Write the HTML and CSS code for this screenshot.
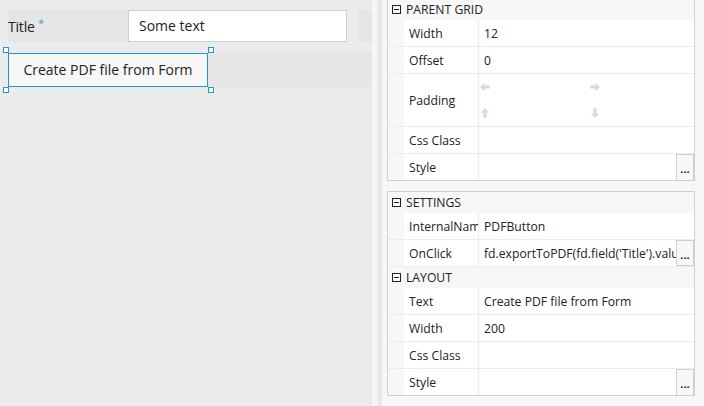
FILE: index.html
```html
<!DOCTYPE html>
<html>
<head>
<meta charset="utf-8">
<link rel="stylesheet" href="styles.css">
</head>
<body>
<div class="canvas">
  <div class="field-row">
    <div class="field-label">Title <span class="req">*</span></div>
    <div class="field-input">Some text</div>
    <div class="field-gap"></div>
    <div class="field-rest"></div>
  </div>
  <div class="button-row">
    <div class="btn-wrap">
      <div class="pdf-btn">Create PDF file from Form</div>
      <span class="handle h-tl"></span>
      <span class="handle h-tr"></span>
      <span class="handle h-bl"></span>
      <span class="handle h-br"></span>
    </div>
  </div>
</div>
<div class="splitter"></div>
<div class="props">
  <div class="panel panel-first">
    <div class="ph"><span class="ph-icon"><span class="minus"></span></span><span class="ph-title">PARENT GRID</span></div>
    <div class="row"><div class="indent"></div><div class="lbl">Width</div><div class="val">12</div></div>
    <div class="row"><div class="indent"></div><div class="lbl">Offset</div><div class="val">0</div></div>
    <div class="row row-pad"><div class="indent"></div><div class="lbl">Padding</div>
      <div class="val pad-grid">
        <div class="pad-cell"><svg width="10" height="10" viewBox="0 0 10 10"><path d="M0 5 L4.5 0.8 L4.5 3.4 L10 3.4 L10 6.6 L4.5 6.6 L4.5 9.2 Z" fill="#dadada"/></svg></div>
        <div class="pad-cell"><svg width="10" height="10" viewBox="0 0 10 10"><path d="M10 5 L5.5 0.8 L5.5 3.4 L0 3.4 L0 6.6 L5.5 6.6 L5.5 9.2 Z" fill="#dadada"/></svg></div>
        <div class="pad-cell"><svg width="10" height="10" viewBox="0 0 10 10"><path d="M5 0 L0.8 4.5 L3.4 4.5 L3.4 10 L6.6 10 L6.6 4.5 L9.2 4.5 Z" fill="#dadada"/></svg></div>
        <div class="pad-cell"><svg width="10" height="10" viewBox="0 0 10 10"><path d="M5 10 L0.8 5.5 L3.4 5.5 L3.4 0 L6.6 0 L6.6 5.5 L9.2 5.5 Z" fill="#dadada"/></svg></div>
      </div>
    </div>
    <div class="row"><div class="indent"></div><div class="lbl">Css Class</div><div class="val"></div></div>
    <div class="row row-last"><div class="indent"></div><div class="lbl">Style</div><div class="val"><span class="val-text"></span><span class="dots">...</span></div></div>
  </div>
  <div class="panel">
    <div class="ph"><span class="ph-icon"><span class="minus"></span></span><span class="ph-title">SETTINGS</span></div>
    <div class="row"><div class="indent"></div><div class="lbl">InternalName</div><div class="val">PDFButton</div></div>
    <div class="row"><div class="indent"></div><div class="lbl">OnClick</div><div class="val"><span class="val-text">fd.exportToPDF(fd.field('Title').value)</span><span class="dots">...</span></div></div>
    <div class="ph"><span class="ph-icon"><span class="minus"></span></span><span class="ph-title">LAYOUT</span></div>
    <div class="row"><div class="indent"></div><div class="lbl">Text</div><div class="val">Create PDF file from Form</div></div>
    <div class="row"><div class="indent"></div><div class="lbl">Width</div><div class="val">200</div></div>
    <div class="row"><div class="indent"></div><div class="lbl">Css Class</div><div class="val"></div></div>
    <div class="row row-last"><div class="indent"></div><div class="lbl">Style</div><div class="val"><span class="val-text"></span><span class="dots">...</span></div></div>
  </div>
</div>
</body>
</html>
```
FILE: styles.css
```css
html, body {
  margin: 0;
  padding: 0;
}
body {
  width: 704px;
  height: 406px;
  overflow: hidden;
  display: flex;
  font-family: "Open Sans", "Noto Sans", sans-serif;
  color: #222;
  background: #f7f7f7;
}
.canvas {
  width: 364px;
  height: 406px;
  background: #ebebeb;
  padding: 10px 0 0 8px;
  box-sizing: content-box;
  flex: none;
}
.field-row {
  display: flex;
  height: 32px;
}
.field-label {
  width: 120px;
  background: #e5e5e5;
  font-size: 14px;
  line-height: 26px;
  letter-spacing: -0.2px;
}
.req {
  color: #3aa0dc;
  font-size: 11px;
  vertical-align: 5px;
}
.field-input {
  width: 197px;
  height: 30px;
  background: #fff;
  border: 1px solid #cfcfcf;
  font-size: 14px;
  line-height: 30px;
  padding-left: 10px;
  padding-right: 10px;
}
.field-gap {
  width: 11px;
}
.field-rest {
  flex: 1;
  background: #e5e5e5;
}
.button-row {
  margin-top: 11px;
  height: 34px;
  background: #e6e6e6;
}
.btn-wrap {
  position: relative;
  width: 200px;
  height: 34px;
}
.pdf-btn {
  box-sizing: border-box;
  width: 200px;
  height: 34px;
  background: #f7f7f7;
  border: 1px solid #1b9ad6;
  font-size: 14px;
  line-height: 32px;
  text-align: center;
}
.handle {
  position: absolute;
  width: 4px;
  height: 4px;
  border: 1px solid #1b9ad6;
  background: #fff;
}
.h-tl { left: -5px; top: -6px; }
.h-tr { left: 200px; top: -6px; }
.h-bl { left: -5px; top: 34px; }
.h-br { left: 200px; top: 34px; }
.splitter {
  flex: none;
  width: 5px;
  background: #f6f6f6;
  border-right: 5px solid #e8e8e8;
}
.props {
  flex: none;
  width: 308px;
  min-width: 0;
  padding: 0 9px 0 5px;
  background: #f7f7f7;
}
.panel {
  border: 1px solid #d0d0d0;
  background: #f7f7f7;
  margin-top: 10px;
}
.panel-first {
  margin-top: -2px;
}
.ph {
  height: 21px;
  display: flex;
  align-items: center;
  font-size: 12.2px;
  color: #222;
}
.ph-icon {
  width: 7px;
  height: 7px;
  border: 1px solid #222;
  margin-left: 4px;
  margin-right: 9px;
  position: relative;
  flex: none;
}
.ph-title {
  margin-left: -4px;
}
.minus {
  position: absolute;
  left: 1px;
  right: 1px;
  top: 3px;
  height: 1px;
  background: #222;
}
.row {
  display: flex;
  height: 26px;
  border-bottom: 1px solid #ececec;
  font-size: 12.2px;
}
.row-last {
  border-bottom: none;
  height: 26px;
}
.row-pad {
  height: 52px;
}
.indent {
  width: 16px;
  background: #f7f7f7;
  flex: none;
}
.lbl {
  width: 69px;
  padding-left: 5px;
  background: #fff;
  border-right: 1px solid #ececec;
  display: flex;
  align-items: center;
  overflow: hidden;
  white-space: nowrap;
  flex: none;
}
.val {
  flex: 1;
  background: #fff;
  padding-left: 5px;
  display: flex;
  align-items: center;
  overflow: hidden;
  white-space: nowrap;
  min-width: 0;
}
.val-text {
  flex: 1;
  overflow: hidden;
  white-space: nowrap;
  min-width: 0;
}
.dots {
  flex: none;
  box-sizing: border-box;
  width: 18px;
  height: 26px;
  border: 1px solid #cfcfcf;
  background: #f7f7f7;
  font-size: 11px;
  font-weight: bold;
  text-align: center;
  line-height: 28px;
}
.row-last .dots {
  height: 27px;
}
.pad-grid {
  padding-left: 1px;
  display: grid;
  grid-template-columns: 110px 1fr;
  grid-template-rows: 26px 26px;
  align-items: center;
}
.pad-cell {
  display: flex;
  align-items: center;
  height: 26px;
}
.pad-cell svg {
  display: block;
}
```
